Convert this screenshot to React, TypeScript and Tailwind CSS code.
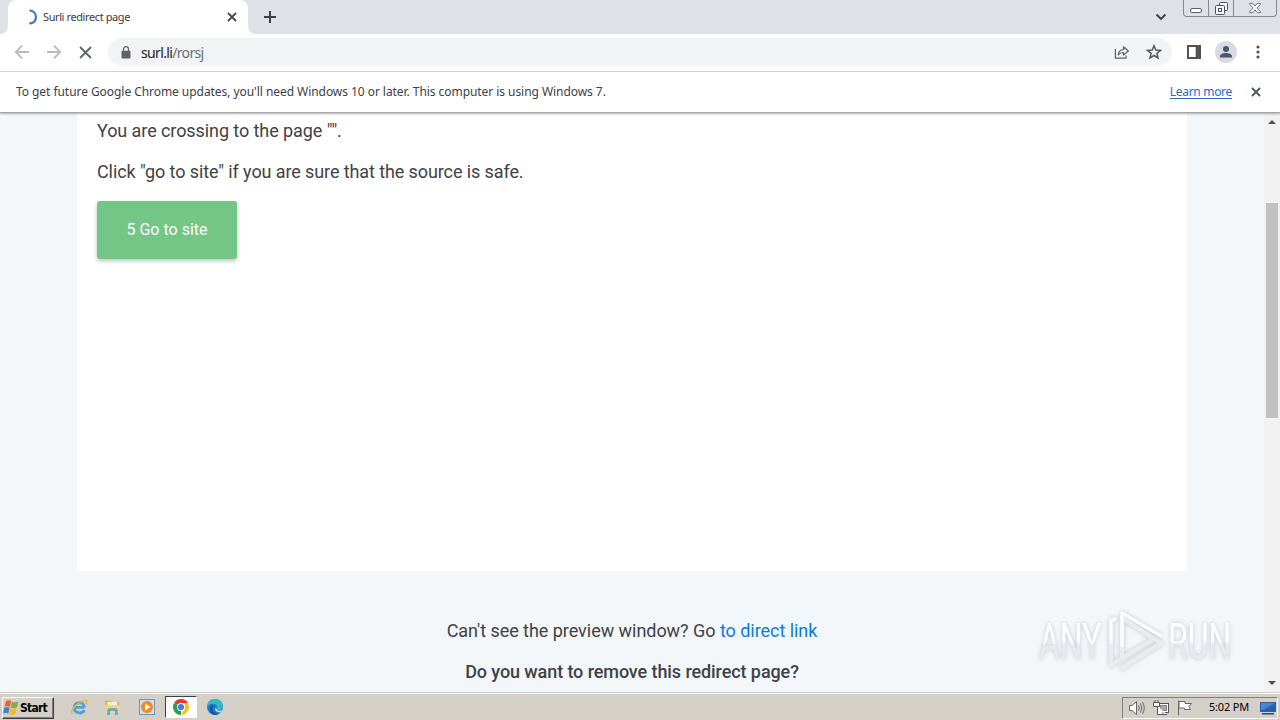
import React from 'react';

const uiFont = "font-['Noto_Sans','Open_Sans',sans-serif]";

const Spinner = () => (
  <svg width="16" height="16" viewBox="0 0 16 16" fill="none">
    <path d="M8.5 1.6C15.8 2.6 15.8 13.4 8.2 14.4" stroke="#3b78c8" strokeWidth="2.2" strokeLinecap="round" />
  </svg>
);

const CrossIcon = ({ size, color, width = 2 }: { size: number; color: string; width?: number }) => (
  <svg width={size} height={size} viewBox={`0 0 ${size} ${size}`} stroke={color} strokeWidth={width}>
    <path d={`M1 1L${size - 1} ${size - 1}M${size - 1} 1L1 ${size - 1}`} />
  </svg>
);

const ArrowIcon = ({ flip = false }: { flip?: boolean }) => (
  <svg width="16" height="16" viewBox="0 0 16 16" fill="none" stroke="#b9bbbe" strokeWidth="1.8" className={flip ? 'rotate-180' : ''}>
    <path d="M15 8H2M8 1.6L1.8 8L8 14.4" />
  </svg>
);

const WindowControls = () => (
  <div className="flex h-[17px] w-[94px] rounded-b-[4px] border border-t-0 border-[#85898f] bg-[#dee1e6]">
    <div className="flex w-[25px] items-center justify-center border-r border-[#85898f]">
      <svg width="12" height="16" viewBox="0 0 12 16" fill="#fff" stroke="#5c6066">
        <rect x=".5" y="8.5" width="11" height="4" rx="1.5" />
      </svg>
    </div>
    <div className="flex w-[25px] items-center justify-center border-r border-[#85898f]">
      <svg width="13" height="15" viewBox="0 0 13 15" fill="#f4f5f7" stroke="#4c5056">
        <rect x="4.5" y="1.5" width="8" height="8" rx="1" />
        <rect x=".5" y="4.5" width="9" height="9" rx="1" />
        <rect x="3.5" y="7.5" width="3" height="3" />
      </svg>
    </div>
    <div className="flex flex-1 items-center justify-center">
      <svg width="12" height="12" viewBox="0 0 13 12" fill="#fff" stroke="#55595f" strokeWidth=".9" strokeLinejoin="round">
        <path d="M.8 1H4L6.5 3.8L9 1H12.2V2L8.6 6L12.2 10V11H9L6.5 8.2L4 11H.8V10L4.4 6L.8 2Z" />
      </svg>
    </div>
  </div>
);

const TabStrip = () => (
  <div className="flex h-[34px] shrink-0 bg-[#dee1e6]">
    <div className="w-2 bg-white">
      <div className="h-full rounded-br-[8px] bg-[#dee1e6]" />
    </div>
    <div className="flex w-60 items-center rounded-t-[8px] bg-white pl-[14px] pr-[11px]">
      <Spinner />
      <span className="ml-[5px] text-[11px] tracking-[-0.4px] whitespace-nowrap text-[#3c4043]">Surli redirect page</span>
      <span className="ml-auto">
        <CrossIcon size={10} color="#45484c" width={1.8} />
      </span>
    </div>
    <div className="w-2 bg-white">
      <div className="h-full rounded-bl-[8px] bg-[#dee1e6]" />
    </div>
    <svg width="12" height="12" viewBox="0 0 12 12" className="mt-[11px] ml-2" stroke="#3c4043" strokeWidth="2">
      <path d="M6 0V12M0 6H12" />
    </svg>
    <svg width="12" height="8" viewBox="0 0 12 8" className="mt-[13px] ml-auto mr-4" fill="none" stroke="#3c4043" strokeWidth="1.9">
      <path d="M1.5 1.5L6 6L10.5 1.5" />
    </svg>
    <div className="mr-[3px]">
      <WindowControls />
    </div>
  </div>
);

const Toolbar = () => (
  <div className="flex h-[38px] shrink-0 items-center border-b border-[#d4d6d9] bg-white pb-px pl-[14px]">
    <ArrowIcon />
    <span className="ml-4">
      <ArrowIcon flip />
    </span>
    <span className="ml-[17px]">
      <CrossIcon size={13} color="#5f6368" width={1.8} />
    </span>
    <div className="ml-4 flex h-7 w-[1064px] items-center rounded-full bg-[#f1f3f4] pl-[13px] pr-[10px]">
      <svg width="10" height="13" viewBox="0 0 10 13" fill="#5f6368">
        <rect x=".5" y="4.8" width="9" height="7.7" rx="1" />
        <path d="M2.5 5V3.2a2.5 2.5 0 0 1 5 0V5" fill="none" stroke="#5f6368" strokeWidth="1.2" />
      </svg>
      <span className="ml-[10px] text-[14px] tracking-[-0.65px] text-[#202124]">
        surl.li<span className="text-[#6b6f74]">/rorsj</span>
      </span>
      <svg width="16" height="15" viewBox="0 0 16 15" className="ml-auto" fill="none" stroke="#5f6368" strokeWidth="1.2">
        <path d="M1.4 4V13.2H12V10.5" />
        <path d="M4.2 10C4.5 6.5 6.5 4.7 9.5 4.5V1.8L14.4 6L9.5 10V7.5C7.2 7.5 5.5 8.2 4.2 10Z" strokeLinejoin="round" />
      </svg>
      <svg width="16" height="16" viewBox="0 0 16 16" className="ml-4" fill="none" stroke="#55595e" strokeWidth="1.5">
        <path d="M8 1.7L9.8 6L14.5 6.4L10.9 9.4L12 14L8 11.5L4 14L5.1 9.4L1.5 6.4L6.2 6Z" />
      </svg>
    </div>
    <svg width="14" height="14" viewBox="0 0 14 14" className="ml-[15px]" fill="#515357">
      <path fillRule="evenodd" d="M0 0H14V14H0ZM2 2V12H8.7V2Z" />
    </svg>
    <svg width="22" height="22" viewBox="0 0 22 22" className="ml-[14px]">
      <circle cx="11" cy="11" r="11" fill="#d8dbe1" />
      <circle cx="11" cy="8" r="3" fill="#49546d" />
      <path d="M5 16.5V15.4C5 13 8.5 12 11 12S17 13 17 15.4V16.5Z" fill="#49546d" />
    </svg>
    <svg width="4" height="14" viewBox="0 0 4 14" className="ml-[19px]" fill="#515357">
      <circle cx="2" cy="2" r="1.6" />
      <circle cx="2" cy="7" r="1.6" />
      <circle cx="2" cy="12" r="1.6" />
    </svg>
  </div>
);

const InfoBar = () => (
  <div className="z-10 flex h-[41px] shrink-0 items-center border-b border-[#a5a6a8] bg-white pl-4 pr-[19px] text-[12px] text-[#3c4043] shadow-[0_1px_2px_rgba(0,0,0,0.3)]">
    <span className="tracking-[-0.055px]">
      To get future Google Chrome updates, you'll need Windows 10 or later. This computer is using Windows 7.
    </span>
    <a className="ml-auto mr-[19px] tracking-[-0.3px] text-[#2a6bc8] underline underline-offset-2">Learn more</a>
    <CrossIcon size={10} color="#55585c" width={1.9} />
  </div>
);

const Scrollbar = () => (
  <div className="flex w-4 shrink-0 flex-col items-center bg-[#f1f1f1]">
    <svg width="8" height="4" viewBox="0 0 8 4" className="mt-[7px]" fill="#505050">
      <path d="M0 4L4 0L8 4Z" />
    </svg>
    <div className="mt-[79px] h-[215px] w-3 bg-[#c1c1c1]" />
    <svg width="8" height="4" viewBox="0 0 8 4" className="mt-auto mb-[7px]" fill="#505050">
      <path d="M0 0H8L4 4Z" />
    </svg>
  </div>
);

// Translucent logo laid over the lower right corner of the page
const Watermark = () => (
  <svg
    className="absolute left-[1030px] top-[600px] z-20 [filter:drop-shadow(0_0_2px_rgba(100,110,120,0.35))]"
    width="250"
    height="80"
    viewBox="0 0 250 80"
  >
    <defs>
      <linearGradient id="fade" x1="0" y1="0" x2="0" y2="1">
        <stop offset="0.48" stopColor="#fdfeff" />
        <stop offset="0.56" stopColor="#e6eaed" />
      </linearGradient>
    </defs>
    <g fill="url(#fade)" className="font-['Roboto','Open_Sans',sans-serif]" fontSize="50" fontWeight="400">
      <text transform="translate(9 59) scale(.64 1)">ANY</text>
      <text transform="translate(138 59) scale(.64 1)">RUN</text>
    </g>
    <g fill="none" strokeLinecap="round" strokeLinejoin="round">
      <path d="M85 19L81 21V65L88 60M92 68L131 43L92 18V58L122 40" stroke="#e8ecef" strokeWidth="4.5" />
      <path d="M85 19L81 21V42M92 46V13L131 36" stroke="#fcfdfe" strokeWidth="3.2" />
    </g>
  </svg>
);

const Page = () => (
  <div className="flex h-[579px] shrink-0">
    <main className="flex flex-1 flex-col items-center overflow-hidden bg-[#f3f7fa] font-['Roboto',sans-serif] text-[18px] leading-[27px] text-[#3e4247]">
      <section className="h-[458px] w-[1110px] bg-white px-5 pt-1">
        <p className="tracking-[-0.08px]">You are crossing to the page "".</p>
        <p className="mt-[14px] tracking-[-0.1px]">Click "go to site" if you are sure that the source is safe.</p>
        <button className="mt-4 h-[58px] w-[140px] rounded-[3px] bg-[#73c686] pb-0.5 text-[16px] text-white shadow-[0_2px_4px_rgba(0,0,0,0.25)]">
          5 Go to site
        </button>
      </section>
      <p className="mt-[46px] tracking-[-0.04px]">
        Can't see the preview window? Go <a className="text-[#0b7be0]">to direct link</a>
      </p>
      <p className="mt-[14px] font-medium tracking-[-0.09px]">Do you want to remove this redirect page?</p>
    </main>
    <Scrollbar />
  </div>
);

const WindowsLogo = () => (
  <svg width="17" height="17" viewBox="0 0 17 15" preserveAspectRatio="none">
    <path d="M3 2C5 .6 6.5 .8 8.2 1.8L6.8 7C5 6 3.5 6 1.6 7Z" fill="#e8622c" />
    <path d="M9 2.2C11 3.4 13 3.2 15.5 2L14 7.3C12 8.5 10 8.3 7.6 7.2Z" fill="#7db33f" />
    <path d="M1.4 7.7C3.3 6.8 5 6.8 6.6 7.8L5.2 13C3.5 12 2 12 0 12.9Z" fill="#3d84ca" />
    <path d="M7.4 8C9.5 9.3 11.5 9.2 13.8 8L12.3 13.2C10 14.5 8 14.2 6 13.2Z" fill="#f4b92f" />
  </svg>
);

const ExplorerLogo = () => (
  <svg width="18" height="18" viewBox="0 0 18 18" fill="none">
    <path d="M14.3 9.4H5.2M14.4 12.2C11.2 17 4.2 14.9 4.2 9.7C4.2 3.6 13.9 2.8 14.5 9.4" stroke="#45a5dc" strokeWidth="2.9" />
    <path d="M2.4 15.6C-1 15 5 5 15 2.3C18 1.5 17.4 4 15.8 6" stroke="#e7b63b" strokeWidth="1.3" />
  </svg>
);

const FolderLogo = () => (
  <svg width="17" height="17" viewBox="0 0 17 17">
    <path d="M1 1.5H7L8 3H15.5V14H1Z" fill="#dcb956" />
    <path d="M3.5 3H13V8H3.5Z" fill="#f9f1c8" />
    <path d="M1 6H16V14H1Z" fill="#f0d67e" />
    <path d="M3.2 16V11.5Q3.2 9 6 9H11Q13.8 9 13.8 11.5V16H11V12H6V16Z" fill="#5fadd3" />
  </svg>
);

const MediaLogo = () => (
  <svg width="16" height="16" viewBox="0 0 16 16">
    <rect x=".5" y=".5" width="15" height="15" fill="#cbe0f1" stroke="#6797bf" />
    <circle cx="8" cy="8" r="6" fill="#f08a1e" />
    <path d="M6 4.5L11.5 8L6 11.5Z" fill="#fff" />
  </svg>
);

const ChromeLogo = () => (
  <svg width="16" height="16" viewBox="0 0 16 16">
    <path d="M8 8L1.07 4A8 8 0 0 1 14.93 4Z" fill="#e33b2e" />
    <path d="M8 8L8 16A8 8 0 0 1 1.07 4Z" fill="#2da04e" />
    <path d="M8 4H14.9A8 8 0 0 1 8 16L11.5 10Z" fill="#fbc116" />
    <circle cx="8" cy="8" r="4" fill="#fff" />
    <circle cx="8" cy="8" r="3.1" fill="#3e7ee8" />
  </svg>
);

const EdgeLogo = () => (
  <svg width="16" height="16" viewBox="0 0 16 16">
    <circle cx="8" cy="8" r="8" fill="#1b7fd0" />
    <path d="M.1 7C1 2 5 0 8 0C13 0 16 4 16 7.5C16 10 13.8 11 12 11C10 11 9.4 10.2 10 9.5C11 7 9 4.8 6 4.8C3.5 4.8 1 6 .1 7Z" fill="#37b9bb" />
    <path d="M5.5 9C5 12 7.5 14.8 12 14.8C9 17 3.5 16 2.8 11C2.4 8 5 5.8 7.2 5.5C6.4 6 5.7 7.4 5.5 9Z" fill="#14549b" />
    <path d="M9.6 9.6C9.4 11 11.5 12.4 15.4 11.2C14.9 12 14.4 12.7 13.6 13.4C10.5 13.6 7.6 12 8.2 9Z" fill="#d4d0c8" />
  </svg>
);

const Taskbar = () => (
  <div className="flex h-7 shrink-0 items-center border-t border-[#d4d0c8] bg-[#d4d0c8] shadow-[inset_0_1px_0_#fff]">
    <button className="mt-0.5 ml-0.5 flex h-[22px] w-[52px] items-center border border-t-white border-r-[#404040] border-b-[#404040] border-l-white font-['DejaVu_Sans_Condensed','DejaVu_Sans',sans-serif] text-[12px] font-bold tracking-[-0.75px] text-black shadow-[inset_-1px_-1px_0_#808080]">
      <WindowsLogo />
      <span>Start</span>
    </button>
    <span className="mt-px ml-4"><ExplorerLogo /></span>
    <span className="mt-px ml-4"><FolderLogo /></span>
    <span className="mt-px ml-[18px]"><MediaLogo /></span>
    <div className="mt-px ml-[10px] flex h-[22px] w-8 items-center justify-center border border-t-[#404040] border-r-white border-b-white border-l-[#404040] bg-white">
      <ChromeLogo />
    </div>
    <span className="mt-px ml-[10px]"><EdgeLogo /></span>
    <div className="mt-0.5 mr-0.5 ml-auto flex h-[22px] w-[156px] items-center border border-t-[#808080] border-r-white border-b-white border-l-[#808080] pl-[6px] text-black">
      <svg width="16" height="16" viewBox="0 0 16 16" fill="#fff" stroke="#686868">
        <path d="M.5 5.5H3L7.5 1.5V14.5L3 10.5H.5Z" />
        <path d="M9.5 5.5Q11 8 9.5 10.5M11.5 3.5Q14 8 11.5 12.5M13.5 2Q17 8 13.5 14" fill="none" />
      </svg>
      <svg width="17" height="16" viewBox="0 0 17 16" className="ml-2" fill="#fff" stroke="#555">
        <rect x="5.5" y="3.5" width="10" height="9" />
        <rect x="7.5" y="5.5" width="6" height="5" fill="#a8a8a8" stroke="#888" />
        <path d="M.5 2.5H6.5V6.5H4.5V14.5H14M2 0V2M5 0V2M.5 2.5V6.5H4.5M10 12.5V14.5" />
      </svg>
      <svg width="16" height="16" viewBox="0 0 16 16" className="ml-[7px]" fill="#fff" stroke="#666">
        <path d="M1.5 .5V15.5M2 1.5H8V3.5H14.5L12 6.5L13.5 9.5H7.5V8H2Z" />
      </svg>
      <span className="ml-4 text-[11px] tracking-[-0.2px] whitespace-nowrap">5:02 PM</span>
      <svg width="16" height="14" viewBox="0 0 16 14" className="ml-auto mr-px">
        <path d="M0 1H16V11H0Z" fill="#285fae" />
        <path d="M1 2H15L3 9H1Z" fill="#4588d2" />
        <path d="M2 12H14V13.5H2Z" fill="#294a77" />
      </svg>
    </div>
  </div>
);

const App: React.FC = () => {
  return (
    <div className={`relative flex h-[720px] w-[1280px] flex-col overflow-hidden ${uiFont}`}>
      <TabStrip />
      <Toolbar />
      <InfoBar />
      <Page />
      <Taskbar />
      <Watermark />
    </div>
  );
};

export default App;
